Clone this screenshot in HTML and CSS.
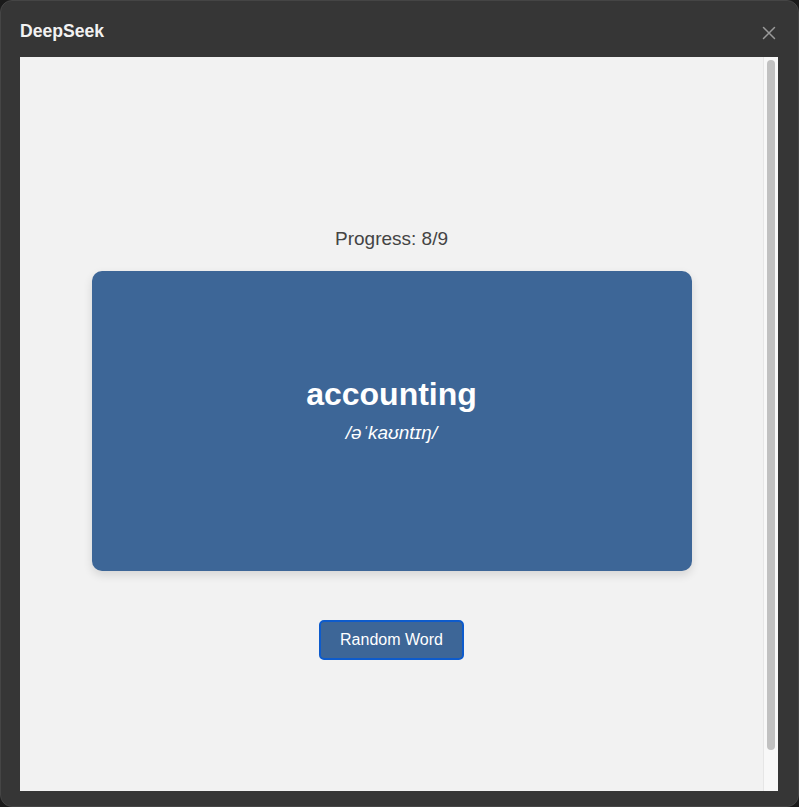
FILE: index.html
```html
<!DOCTYPE html>
<html>
<head>
<meta charset="utf-8">
<link rel="stylesheet" href="styles.css">
</head>
<body>
<div class="window">
  <div class="titlebar">
    <span class="title">DeepSeek</span>
    <svg class="close" width="14" height="14" viewBox="0 0 14 14"><path d="M1.5 1.5L12.5 12.5M12.5 1.5L1.5 12.5" stroke="#9a9a9a" stroke-width="1.5" stroke-linecap="round"/></svg>
  </div>
  <div class="frame">
    <div class="content">
      <div class="progress">Progress: 8/9</div>
      <div class="card">
        <div class="word">accounting</div>
        <div class="phonetic">/əˈkaʊntɪŋ/</div>
      </div>
      <button class="btn">Random Word</button>
    </div>
    <div class="scrollbar"><div class="thumb"></div></div>
  </div>
</div>
</body>
</html>
```
FILE: styles.css
```css
html, body { margin: 0; padding: 0; }
body {
  width: 799px; height: 807px;
  background: #1a1a1a;
  font-family: "Liberation Sans", Arial, sans-serif;
  overflow: hidden;
}
.window {
  box-sizing: border-box;
  width: 799px; height: 807px;
  background: #363636;
  border-radius: 12px;
  border: 1px solid #454545;
  display: flex;
  flex-direction: column;
  padding: 0 20px 0 19px;
}
.titlebar {
  height: 56px;
  display: flex;
  align-items: center;
  justify-content: space-between;
}
.title {
  color: #f2f2f2;
  font-weight: bold;
  font-size: 17.6px;
  margin-top: 5px;
}
.close { margin-right: 2px; margin-top: 8px; }
.frame {
  height: 734px;
  background: #f2f2f2;
  display: flex;
}
.content {
  flex: 1;
  display: flex;
  flex-direction: column;
  align-items: center;
  padding-top: 171px;
}
.progress {
  color: #444;
  font-size: 19px;
  line-height: 22px;
  margin-bottom: 21px;
}
.card {
  width: 600px; height: 300px;
  background: #3d6697;
  border-radius: 10px;
  box-shadow: 0 4px 10px rgba(0,0,0,0.12);
  display: flex;
  flex-direction: column;
  align-items: center;
  justify-content: center;
  color: #fff;
}
.word {
  font-size: 32px;
  font-weight: bold;
  line-height: 37px;
  margin-top: -22px;
}
.phonetic {
  font-size: 19px;
  font-style: italic;
  line-height: 24px;
  margin-top: 8px;
}
.btn {
  margin-top: 49px;
  width: 145px; height: 40px;
  background: #3d6697;
  color: #fff;
  border: 2px solid #0d5bcc;
  border-radius: 5px;
  font-family: "Liberation Sans", Arial, sans-serif;
  font-size: 16px;
  padding: 0;
}
.scrollbar {
  width: 14px;
  background: #f8f8f8;
  border-left: 1px solid #e6e6e6;
  padding-top: 3px;
  display: flex;
  justify-content: center;
}
.thumb {
  width: 8px;
  height: 690px;
  background: #c1c1c1;
  border-radius: 4px;
}
```
